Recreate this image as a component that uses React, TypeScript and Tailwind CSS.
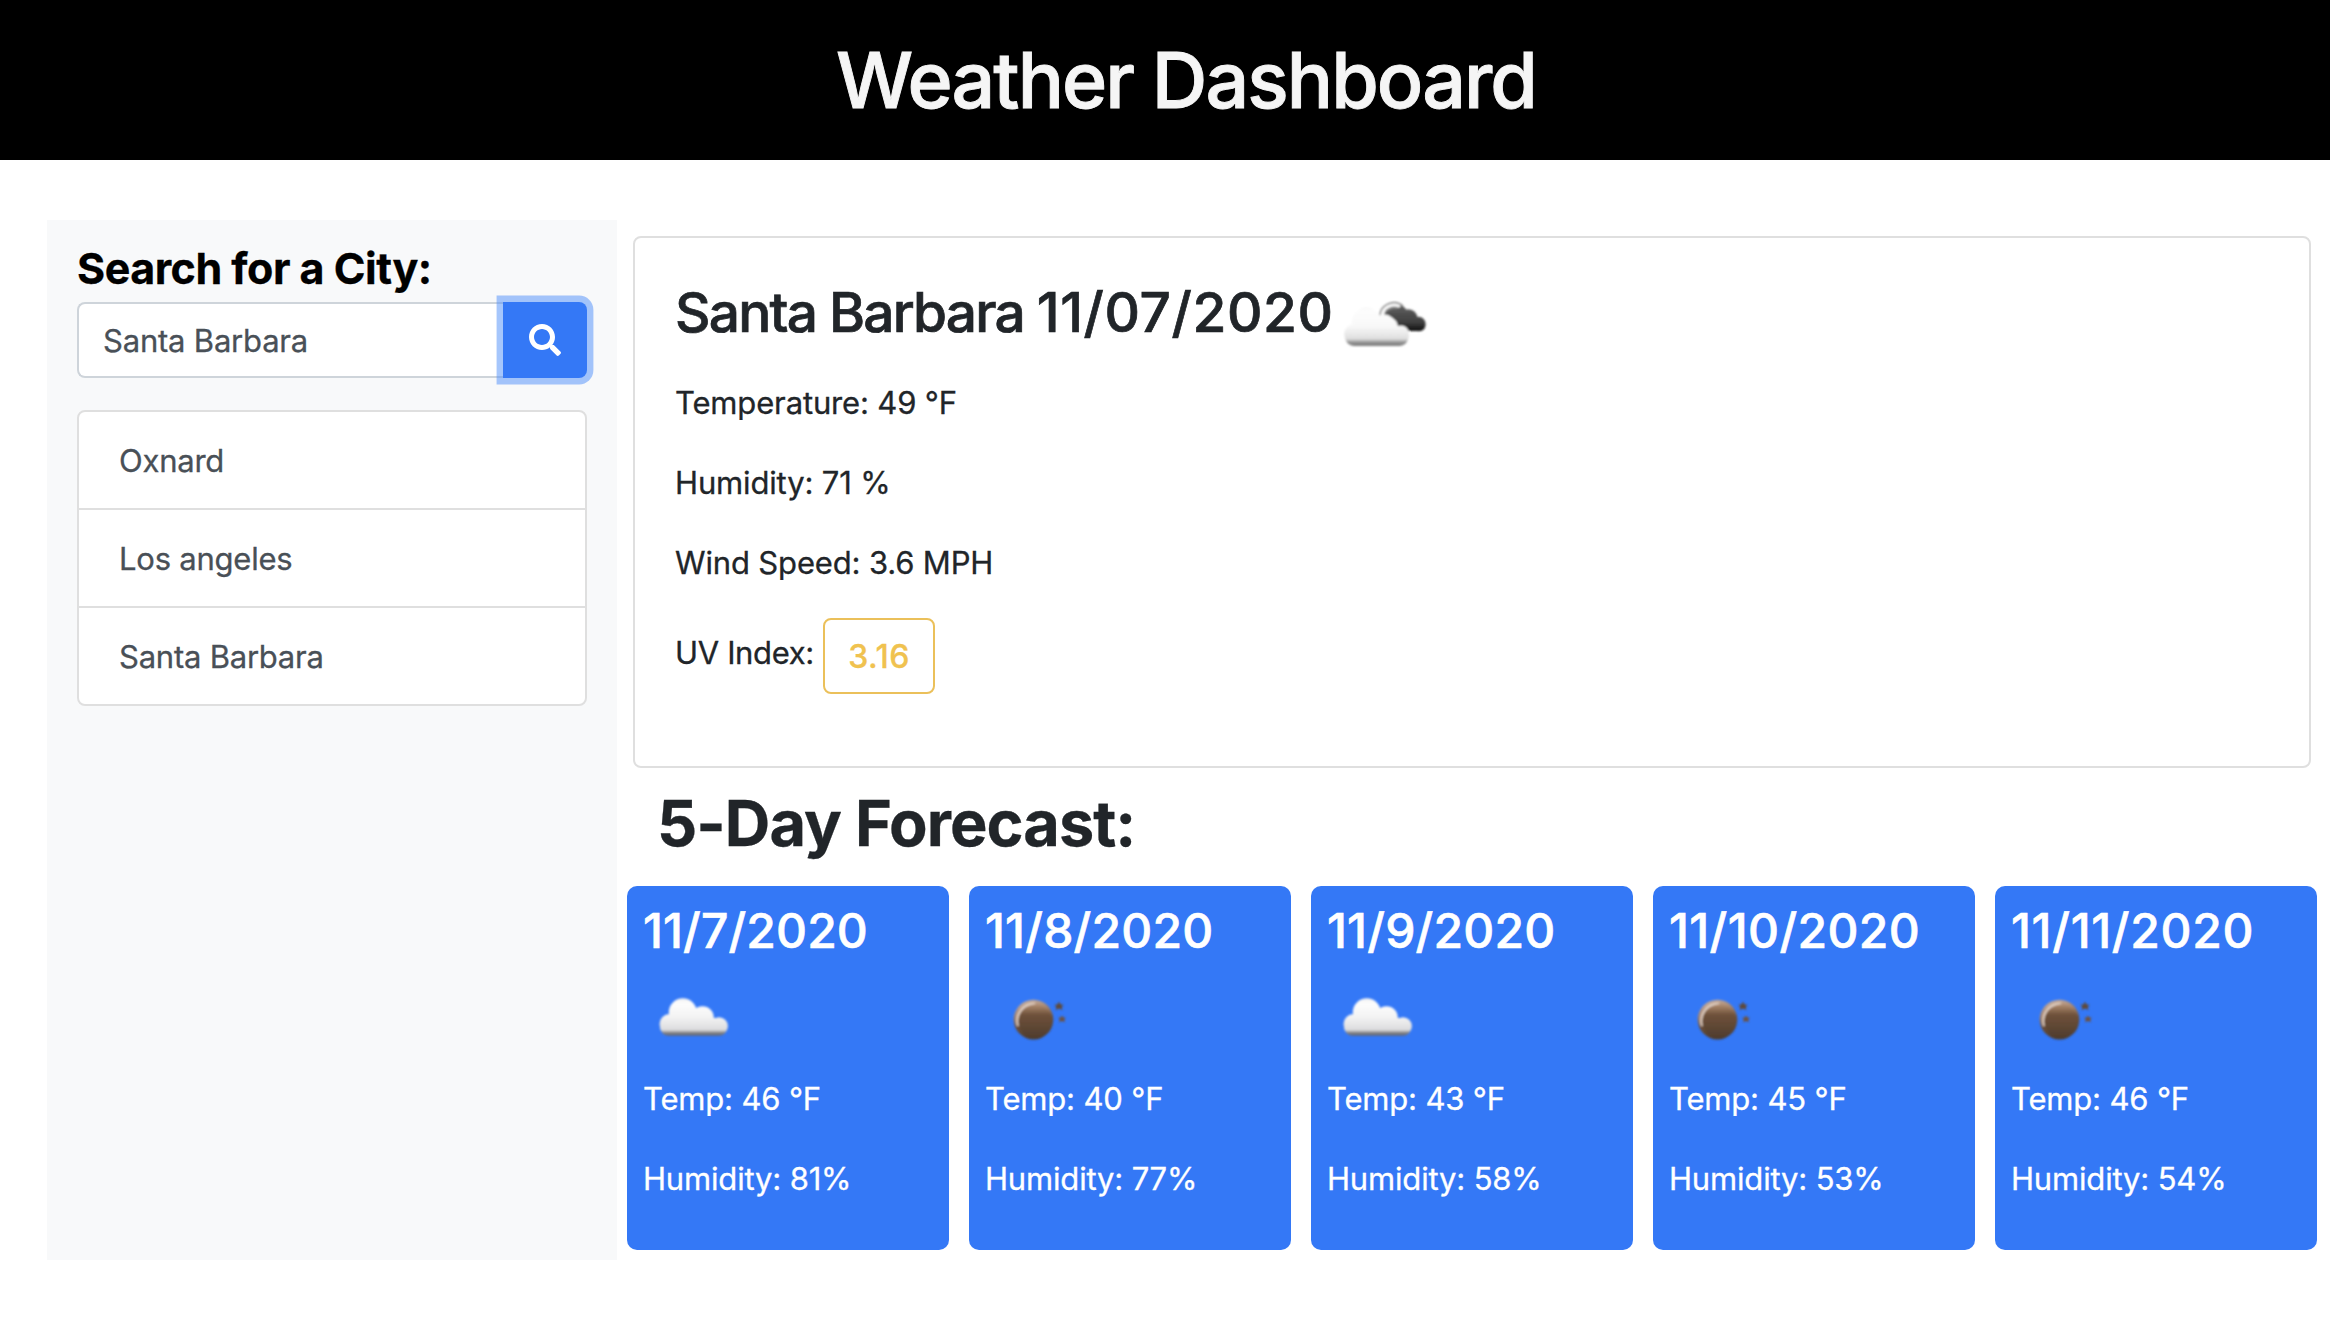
import { useId } from "react";
import { FaSearch } from "react-icons/fa";

type Sky = "cloud" | "night";

const cities = ["Oxnard", "Los angeles", "Santa Barbara"];

const days: { date: string; sky: Sky; temp: number; humidity: number; tracking: string }[] = [
  { date: "11/7/2020", sky: "cloud", temp: 46, humidity: 81, tracking: "tracking-[0.12px]" },
  { date: "11/8/2020", sky: "night", temp: 40, humidity: 77, tracking: "tracking-[0.2px]" },
  { date: "11/9/2020", sky: "cloud", temp: 43, humidity: 58, tracking: "tracking-[0.18px]" },
  { date: "11/10/2020", sky: "night", temp: 45, humidity: 53, tracking: "tracking-[0.38px]" },
  { date: "11/11/2020", sky: "night", temp: 46, humidity: 54, tracking: "tracking-[0.68px]" },
];

function BrokenClouds({ className }: { className: string }) {
  const id = useId();
  const light = `url(#${id}light)`;
  const dark = `url(#${id}dark)`;
  return (
    <svg className={className} viewBox="0 0 100 60" fill="none">
      <defs>
        <linearGradient id={`${id}light`} gradientUnits="userSpaceOnUse" x1="0" y1="17" x2="0" y2="56">
          <stop offset="0" stopColor="#f4f4f4" />
          <stop offset="0.08" stopColor="#fdfdfd" />
          <stop offset="0.5" stopColor="#f8f8f8" />
          <stop offset="0.82" stopColor="#dedede" />
          <stop offset="0.9" stopColor="#969696" />
          <stop offset="1" stopColor="#787878" />
        </linearGradient>
        <linearGradient id={`${id}dark`} gradientUnits="userSpaceOnUse" x1="0" y1="13" x2="0" y2="41">
          <stop offset="0" stopColor="#666666" />
          <stop offset="0.7" stopColor="#3e3e3e" />
          <stop offset="1" stopColor="#0c0c0c" />
        </linearGradient>
        <filter id={`${id}soft`} x="-5%" y="-5%" width="110%" height="110%">
          <feGaussianBlur stdDeviation="0.8" />
        </filter>
      </defs>
      <g filter={`url(#${id}soft)`}>
        <g fill={dark}>
          <circle cx="60" cy="26" r="12" />
          <circle cx="72.5" cy="28" r="8.8" />
          <circle cx="82.5" cy="34" r="7.2" />
          <rect x="55" y="28" width="34" height="13" rx="5" />
        </g>
        <path d="M45.5 26.5 A13 13 0 0 1 64 16.5" stroke="#ffffff" strokeWidth="2.6" />
        <path d="M44 27 A14 13.5 0 0 1 67 16" stroke="#8c8c8c" strokeWidth="1.5" />
        <path d="M47.5 27 A12 11 0 0 1 62 18" stroke="#a0a0a0" strokeWidth="1" />
        <g fill={light} stroke="#ffffff" strokeWidth="1">
          <circle cx="52" cy="37" r="9.5" />
          <circle cx="65" cy="43.5" r="7.5" />
        </g>
        <g fill={light}>
          <circle cx="30.5" cy="32" r="14.5" />
          <circle cx="48" cy="36" r="11.5" />
          <circle cx="64.5" cy="45" r="8.5" />
          <circle cx="18.5" cy="44" r="10.3" />
          <rect x="9" y="38" width="63.5" height="18" rx="9" />
        </g>
      </g>
    </svg>
  );
}

function Cloud() {
  const id = useId();
  return (
    <svg className="block size-[100px]" viewBox="0 0 100 100">
      <defs>
        <linearGradient id={`${id}fill`} gradientUnits="userSpaceOnUse" x1="0" y1="30" x2="0" y2="68">
          <stop offset="0" stopColor="#f1f1f1" />
          <stop offset="0.15" stopColor="#fdfdfd" />
          <stop offset="0.5" stopColor="#f3f3f3" />
          <stop offset="0.84" stopColor="#dcdcde" />
          <stop offset="0.91" stopColor="#85868a" />
          <stop offset="1" stopColor="#5d626d" />
        </linearGradient>
        <filter id={`${id}soft`} x="-5%" y="-5%" width="110%" height="110%">
          <feGaussianBlur stdDeviation="0.8" />
        </filter>
      </defs>
      <g fill={`url(#${id}fill)`} filter={`url(#${id}soft)`}>
        <circle cx="39.8" cy="44.3" r="14" />
        <circle cx="59.5" cy="49.5" r="11.3" />
        <circle cx="76" cy="58" r="8.8" />
        <circle cx="26.5" cy="56" r="10" />
        <rect x="30" y="46" width="40" height="15" />
        <rect x="17" y="50" width="67.5" height="17.8" rx="8.8" />
      </g>
    </svg>
  );
}

function Night() {
  const id = useId();
  return (
    <svg className="block size-[100px]" viewBox="0 0 100 100">
      <defs>
        <linearGradient id={`${id}rim`} x1="0.2" y1="0" x2="0.5" y2="1">
          <stop offset="0" stopColor="#cdb5a5" />
          <stop offset="0.35" stopColor="#a3826b" />
          <stop offset="0.6" stopColor="#6b4f3a" />
          <stop offset="1" stopColor="#4a382a" />
        </linearGradient>
        <linearGradient id={`${id}face`} x1="0" y1="0" x2="0" y2="1">
          <stop offset="0" stopColor="#b08c70" />
          <stop offset="0.3" stopColor="#6f523b" />
          <stop offset="1" stopColor="#4f3c2d" />
        </linearGradient>
        <filter id={`${id}soft`} x="-5%" y="-5%" width="110%" height="110%">
          <feGaussianBlur stdDeviation="0.8" />
        </filter>
      </defs>
      <g filter={`url(#${id}soft)`}>
        <circle cx="48.5" cy="51.6" r="19.8" fill={`url(#${id}rim)`} />
        <path d="M33 58 A17.5 17.5 0 0 1 50 35.6" fill="none" stroke="#e0cfc3" strokeWidth="2" />
        <circle cx="50.2" cy="53.4" r="16.8" fill={`url(#${id}face)`} />
        <path d="M74 33.6l1.5 2.9 3 .2-1.8 2.2.8 3.1-3.5-1.4-3.5 1.4.8-3.1-1.8-2.2 3-.2z" fill="#5f4839" />
        <path d="M77 47.4l1.3 2.2 2.5.2-1.5 1.8.6 2.6-2.9-1.2-2.9 1.2.6-2.6-1.5-1.8 2.5-.2z" fill="#6d5140" />
      </g>
    </svg>
  );
}

function Sidebar() {
  return (
    <aside className="h-[1040px] w-[570px] shrink-0 bg-[#f8f9fa] px-[30px] pt-[21px]">
      <h3 className="text-[43px] leading-[54px] font-bold tracking-[-0.5px] text-black">Search for a City:</h3>
      <div className="mt-[7px] flex h-[76px]">
        <input
          className="min-w-0 flex-1 rounded-l-lg border-2 border-r-0 border-[#ced4da] bg-white px-6 pt-0.5 text-[31px] tracking-[-0.2px] text-[#495057] outline-none"
          defaultValue="Santa Barbara"
        />
        <button className="z-10 flex w-[84px] items-center justify-center rounded-r-lg bg-[#3478f6] text-white shadow-[0_0_0_6.4px_rgba(75,142,250,0.5)]">
          <FaSearch className="size-8" />
        </button>
      </div>
      <ul className="mt-8 divide-y-2 divide-[#dfdfdf] overflow-hidden rounded-lg border-2 border-[#dfdfdf] bg-white">
        {cities.map((city) => (
          <li
            key={city}
            className="flex h-[98px] items-center px-10 pt-0.5 text-[31px] tracking-[-0.23px] text-[#495057] last:h-24"
          >
            {city}
          </li>
        ))}
      </ul>
    </aside>
  );
}

function Current() {
  return (
    <section className="mt-4 mr-[6px] ml-[6px] h-[532px] rounded-lg border-2 border-[#dfdfdf] px-10 pt-10 text-[31px] leading-[48px] tracking-[-0.15px]">
      <div className="flex h-[67px]">
        <h3 className="w-[661px] pt-px text-[55px] leading-[67px] font-medium tracking-[-1.8px] whitespace-nowrap [-webkit-text-stroke:0.7px]">
          Santa Barbara <span className="tracking-[0.6px]">11/07/2020</span>
        </h3>
        <BrokenClouds className="mt-3 h-[60px] w-[100px] shrink-0" />
      </div>
      <p className="mt-[34px]">Temperature: 49 °F</p>
      <p className="mt-8">Humidity: 71 %</p>
      <p className="mt-8">Wind Speed: 3.6 MPH</p>
      <div className="mt-[31px] flex items-start">
        <p className="mt-[11px] w-[148px] tracking-[-0.35px] whitespace-nowrap">UV Index:</p>
        <span className="flex h-[76px] w-28 items-center justify-center rounded-lg border-2 border-[#ebc05a] pt-px text-[32px] font-medium tracking-[0.5px] text-[#f0c24f]">
          3.16
        </span>
      </div>
    </section>
  );
}

export default function App() {
  return (
    <div className="min-h-screen w-[2330px] bg-white font-[Inter,sans-serif] text-[#212529] [-webkit-text-stroke:0.3px]">
      <header className="flex h-40 items-center justify-center bg-black pl-[42px]">
        <h1 className="text-[77px] leading-none font-medium tracking-[-1.93px] text-[#f5f5f5] [-webkit-text-stroke:0.9px]">
          Weather Dashboard
        </h1>
      </header>
      <main className="flex pt-[60px] pl-[47px]">
        <Sidebar />
        <div className="flex-1 pr-[13px] pl-[10px]">
          <Current />
          <h1 className="mt-[17px] ml-[30px] text-[63px] leading-[77px] font-bold tracking-[-0.95px]">5-Day Forecast:</h1>
          <div className="mt-6 grid grid-cols-5 gap-5">
            {days.map((d) => (
              <article
                key={d.date}
                className="h-[364px] rounded-[10px] bg-[#3478f6] px-4 pt-4 text-[31px] leading-[48px] tracking-[-0.17px] text-white"
              >
                <h2 className={`text-[48px] leading-[58px] font-medium [-webkit-text-stroke:0.6px] ${d.tracking}`}>
                  {d.date}
                </h2>
                <div className="mt-2">{d.sky === "cloud" ? <Cloud /> : <Night />}</div>
                <p className="mt-[7px]">Temp: {d.temp} °F</p>
                <p className="mt-8">Humidity: {d.humidity}%</p>
              </article>
            ))}
          </div>
        </div>
      </main>
    </div>
  );
}
